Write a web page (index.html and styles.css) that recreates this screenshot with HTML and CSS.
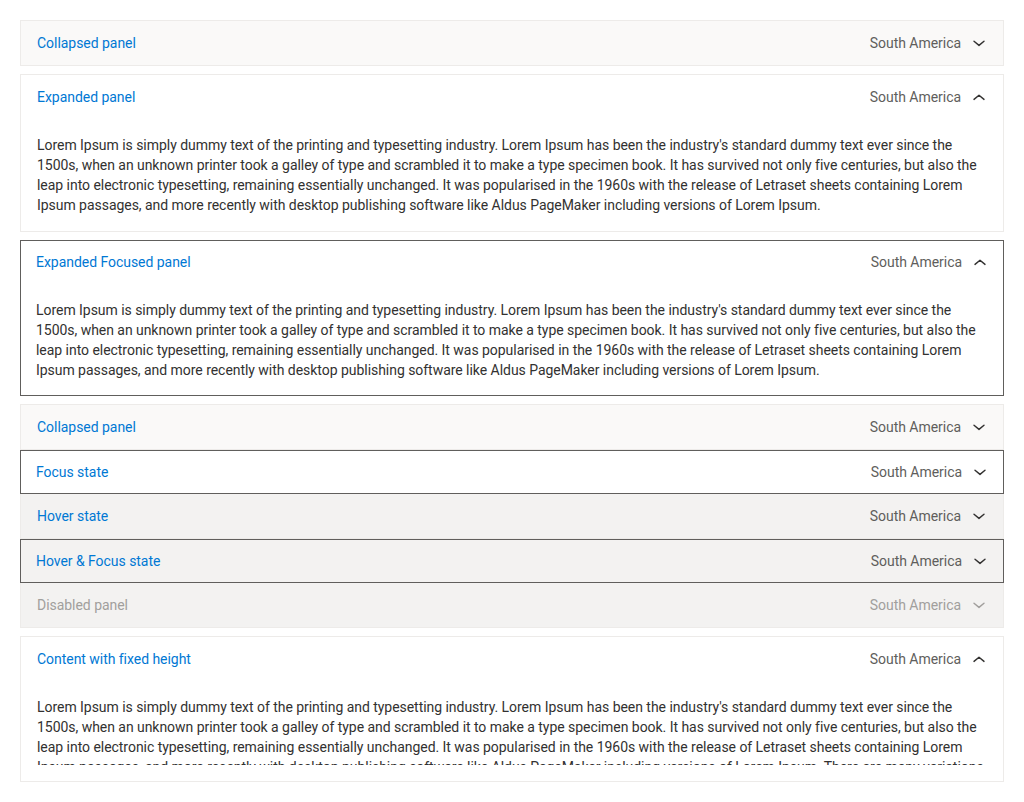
FILE: index.html
```html
<!DOCTYPE html>
<html lang="en">
<head>
<meta charset="utf-8">
<title>Accordion</title>
<link rel="stylesheet" href="styles.css">
</head>
<body>
<div class="page">
  <section class="panel collapsed">
    <div class="header"><span class="title">Collapsed panel</span><span class="meta">South America</span><svg class="chev" viewBox="0 0 16 16"><path d="M3 6.2 L8 10.4 L13 6.2"/></svg></div>
  </section>

  <section class="panel expanded">
    <div class="header"><span class="title">Expanded panel</span><span class="meta">South America</span><svg class="chev" viewBox="0 0 16 16"><path d="M3 10.4 L8 6.2 L13 10.4"/></svg></div>
    <div class="content">Lorem Ipsum is simply dummy text of the printing and typesetting industry. Lorem Ipsum has been the industry's standard dummy text ever since the 1500s, when an unknown printer took a galley of type and scrambled it to make a type specimen book. It has survived not only five centuries, but also the leap into electronic typesetting, remaining essentially unchanged. It was popularised in the 1960s with the release of Letraset sheets containing Lorem Ipsum passages, and more recently with desktop publishing software like Aldus PageMaker including versions of Lorem Ipsum.</div>
  </section>

  <section class="panel expanded focused">
    <div class="header"><span class="title">Expanded Focused panel</span><span class="meta">South America</span><svg class="chev" viewBox="0 0 16 16"><path d="M3 10.4 L8 6.2 L13 10.4"/></svg></div>
    <div class="content">Lorem Ipsum is simply dummy text of the printing and typesetting industry. Lorem Ipsum has been the industry's standard dummy text ever since the 1500s, when an unknown printer took a galley of type and scrambled it to make a type specimen book. It has survived not only five centuries, but also the leap into electronic typesetting, remaining essentially unchanged. It was popularised in the 1960s with the release of Letraset sheets containing Lorem Ipsum passages, and more recently with desktop publishing software like Aldus PageMaker including versions of Lorem Ipsum.</div>
  </section>

  <div class="group">
    <section class="panel collapsed">
      <div class="header"><span class="title">Collapsed panel</span><span class="meta">South America</span><svg class="chev" viewBox="0 0 16 16"><path d="M3 6.2 L8 10.4 L13 6.2"/></svg></div>
    </section>
    <section class="panel focused">
      <div class="header"><span class="title">Focus state</span><span class="meta">South America</span><svg class="chev" viewBox="0 0 16 16"><path d="M3 6.2 L8 10.4 L13 6.2"/></svg></div>
    </section>
    <section class="panel hover">
      <div class="header"><span class="title">Hover state</span><span class="meta">South America</span><svg class="chev" viewBox="0 0 16 16"><path d="M3 6.2 L8 10.4 L13 6.2"/></svg></div>
    </section>
    <section class="panel hover focused">
      <div class="header"><span class="title">Hover &amp; Focus state</span><span class="meta">South America</span><svg class="chev" viewBox="0 0 16 16"><path d="M3 6.2 L8 10.4 L13 6.2"/></svg></div>
    </section>
    <section class="panel disabled">
      <div class="header"><span class="title">Disabled panel</span><span class="meta">South America</span><svg class="chev" viewBox="0 0 16 16"><path d="M3 6.2 L8 10.4 L13 6.2"/></svg></div>
    </section>
  </div>

  <section class="panel expanded">
    <div class="header"><span class="title">Content with fixed height</span><span class="meta">South America</span><svg class="chev" viewBox="0 0 16 16"><path d="M3 10.4 L8 6.2 L13 10.4"/></svg></div>
    <div class="content"><div class="fixed">Lorem Ipsum is simply dummy text of the printing and typesetting industry. Lorem Ipsum has been the industry's standard dummy text ever since the 1500s, when an unknown printer took a galley of type and scrambled it to make a type specimen book. It has survived not only five centuries, but also the leap into electronic typesetting, remaining essentially unchanged. It was popularised in the 1960s with the release of Letraset sheets containing Lorem Ipsum passages, and more recently with desktop publishing software like Aldus PageMaker including versions of Lorem Ipsum. There are many variations of passages of Lorem Ipsum available, but the majority have suffered alteration in some form, by injected humour, or randomised words which don't look even slightly believable.</div></div>
  </section>
</div>
</body>
</html>
```

FILE: styles.css
```css
* { box-sizing: border-box; }

html, body {
  margin: 0;
  padding: 0;
  background: #ffffff;
}

body {
  font-family: Roboto, "Liberation Sans", sans-serif;
  font-size: 14px;
  line-height: 20px;
  letter-spacing: -0.04px;
  color: #323130;
}

.page {
  padding: 20px;
  display: flex;
  flex-direction: column;
  gap: 8px;
}

.group {
  display: flex;
  flex-direction: column;
}

.panel {
  border: 1px solid #edebe9;
  background: #ffffff;
}

.panel.collapsed { background: #faf9f8; }

.group .panel + .panel { border-top: none; }

.header {
  display: flex;
  align-items: center;
  padding: 12px 16px;
  height: 44px;
}

.title {
  flex: 1;
  color: #0078d4;
}

.meta {
  color: #605e5c;
}

.chev {
  width: 16px;
  height: 16px;
  margin-left: 10px;
  flex: none;
}

.chev path {
  fill: none;
  stroke: #323130;
  stroke-width: 1.4;
  stroke-linecap: round;
  stroke-linejoin: round;
}

.content {
  padding: 16px 16px 16px;
  color: #323130;
}

.fixed {
  height: 68px;
  overflow: hidden;
}

/* focused */
.panel.focused {
  border: 1px solid #605e5c;
}
.group .panel.focused + .panel { border-top: none; }
.group .panel + .panel.focused { border-top: 1px solid #605e5c; }

.panel.focused .header {
  padding: 11px 15px 11px 15px;
  height: 42px;
}
.panel.expanded.focused .header {
  padding: 11px 15px 12px 15px;
  height: 43px;
}
.panel.focused .content {
  padding: 16px 15px 15px;
}

/* hover */
.panel.hover { background: #f3f2f1; }

/* disabled */
.panel.disabled { background: #f3f2f1; }
.panel.disabled .title,
.panel.disabled .meta { color: #a19f9d; }
.panel.disabled .chev path { stroke: #a19f9d; }
```
